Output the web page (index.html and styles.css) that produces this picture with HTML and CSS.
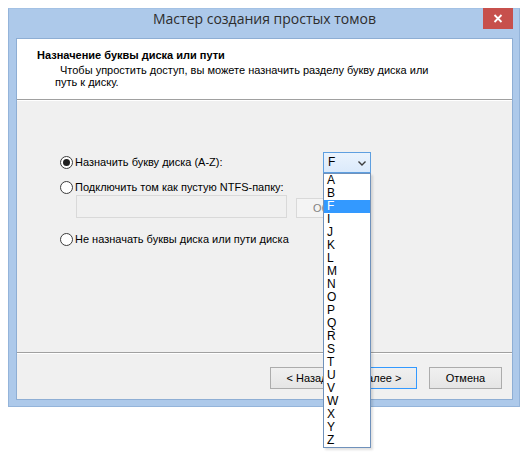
FILE: index.html
```html
<!DOCTYPE html>
<html lang="ru">
<head>
<meta charset="utf-8">
<link rel="stylesheet" href="styles.css">
</head>
<body>
<div class="window">
  <div class="titlebar">
    <div class="title">Мастер создания простых томов</div>
    <div class="close">
      <svg width="10" height="9" viewBox="0 0 10 9"><path d="M1.5 1 L8.5 8 M8.5 1 L1.5 8" stroke="#fff" stroke-width="1.8" fill="none"/></svg>
    </div>
  </div>
  <div class="client">
    <div class="header">
      <div class="h-title">Назначение буквы диска или пути</div>
      <div class="h-sub"><span class="indent">Чтобы упростить доступ, вы можете назначить разделу букву диска или</span><br>путь к диску.</div>
    </div>
    <div class="body">
      <div class="opt opt-first">
        <div class="opt-main"><span class="radio checked"></span><span class="label">Назначить букву диска (A-Z):</span></div>
        <div class="combo">
          <span class="combo-val">F</span>
          <svg class="chev" width="8" height="5" viewBox="0 0 8 5"><path d="M0.5 0.5 L4 4 L7.5 0.5" stroke="#3c3c3c" stroke-width="1.4" fill="none"/></svg>
          <ul class="list">
            <li>A</li><li>B</li><li class="sel">F</li><li>I</li><li>J</li><li>K</li><li>L</li><li>M</li><li>N</li><li>O</li><li>P</li><li>Q</li><li>R</li><li>S</li><li>T</li><li>U</li><li>V</li><li>W</li><li>X</li><li>Y</li><li>Z</li>
          </ul>
        </div>
      </div>
      <div class="opt opt-second"><span class="radio"></span><span class="label">Подключить том как пустую NTFS-папку:</span></div>
      <div class="path-row">
        <div class="field"></div>
        <div class="btn btn-disabled">Обзор...</div>
      </div>
      <div class="opt opt-third"><span class="radio"></span><span class="label">Не назначать буквы диска или пути диска</span></div>
    </div>
    <div class="footer">
      <div class="btn">&lt; Назад</div>
      <div class="btn btn-default">Далее &gt;</div>
      <div class="btn btn-cancel">Отмена</div>
    </div>
  </div>
</div>
</body>
</html>
```
FILE: styles.css
```css
* { box-sizing: border-box; }
html, body { margin: 0; padding: 0; background: #fff; }
html { min-height: 452px; }
body {
  min-height: 452px;
  font-family: "Liberation Sans", Arial, sans-serif;
  font-size: 11px;
  color: #000;
}
.window {
  margin: 8px 0 0 8px;
  width: 512px;
  height: 399px;
  background: #adc9ea;
  border: 1px solid #94b4da;
  border-top-color: #a3c1e4;
  display: flex;
  flex-direction: column;
}
.titlebar {
  height: 29px;
  display: grid;
  grid-template-columns: 37px 1fr 36px;
  align-items: start;
}
.title {
  grid-column: 2;
  text-align: center;
  font-family: "Open Sans", "Noto Sans", sans-serif;
  font-size: 14px;
  line-height: 20px;
  margin-top: 0;
  color: #2d2d2d;
}
.close {
  grid-column: 3;
  width: 30px;
  height: 21px;
  margin-top: -1px;
  background: #c7504c;
  display: flex;
  align-items: center;
  justify-content: center;
}
.client {
  margin-left: 7px;
  width: 497px;
  height: 362px;
  background: #f0f0f0;
  border: 1px solid #8eaed4;
  display: flex;
  flex-direction: column;
}
.header {
  height: 61px;
  flex: none;
  background: #fff;
  border-bottom: 1px solid #a0a0a0;
  padding: 10px 0 0 20px;
}
.h-title {
  font-weight: bold;
  line-height: 13px;
}
.h-sub {
  margin-top: 2px;
  padding-left: 18px;
  line-height: 12px;
}
.indent { padding-left: 5px; }
.body {
  flex: 1;
  border-top: 1px solid #fff;
  padding: 51px 0 0 43px;
}
.opt {
  display: flex;
  align-items: center;
  height: 16px;
}
.opt-first {
  display: grid;
  grid-template-columns: 263px 48px;
  height: 21px;
  align-items: center;
}
.opt-main { display: flex; align-items: center; }
.opt-second { margin-top: 6px; }
.opt-third { margin-top: 13px; }
.radio {
  width: 13px;
  height: 13px;
  border-radius: 50%;
  border: 1px solid #3c3c3c;
  background: #fff;
  flex: none;
  display: flex;
  align-items: center;
  justify-content: center;
}
.radio.checked::after {
  content: "";
  width: 7px;
  height: 7px;
  border-radius: 50%;
  background: #1f1f1f;
}
.label {
  margin-left: 2px;
  white-space: nowrap;
  line-height: 13px;
}
.combo {
  position: relative;
  width: 48px;
  height: 21px;
  border: 1px solid #5e9fe0;
  background: linear-gradient(#eaf3fd, #dbeafb);
  display: flex;
  align-items: center;
  justify-content: space-between;
  padding: 0 4px 0 4px;
}
.combo-val {
  font-size: 12px;
  line-height: 13px;
}
.chev { display: block; margin-top: 1px; }
.list {
  position: absolute;
  left: -1px;
  top: 20px;
  width: 48px;
  margin: 0;
  padding: 0;
  list-style: none;
  background: #fff;
  border: 1px solid #6f91bb;
  box-shadow: 2px 2px 2px rgba(0,0,0,0.12);
  z-index: 5;
}
.list li {
  height: 13px;
  line-height: 13px;
  font-size: 12px;
  padding-left: 3px;
}
.list li.sel {
  background: #3399ff;
  color: #fff;
}
.path-row {
  display: flex;
  align-items: flex-end;
  padding-left: 16px;
}
.field {
  width: 211px;
  height: 23px;
  border: 1px solid #d9d9d9;
  background: #f0f0f0;
}
.btn {
  width: 74px;
  height: 22px;
  border: 1px solid #acacac;
  background: linear-gradient(#f0f0f0, #e5e5e5);
  display: flex;
  align-items: center;
  justify-content: center;
  white-space: nowrap;
  color: #000;
}
.btn-disabled {
  margin-left: 9px;
  height: 20px;
  width: 75px;
  border-color: #d9d9d9;
  background: #f4f4f4;
  color: #838383;
}
.footer {
  height: 47px;
  flex: none;
  border-top: 1px solid #a0a0a0;
  box-shadow: inset 0 1px 0 #fff;
  display: flex;
  align-items: flex-start;
  padding: 14px 0 0 253px;
}
.btn-default {
  border-color: #3399ff;
  width: 73px;
}
.btn-cancel {
  margin-left: 12px;
  width: 73px;
}
```
